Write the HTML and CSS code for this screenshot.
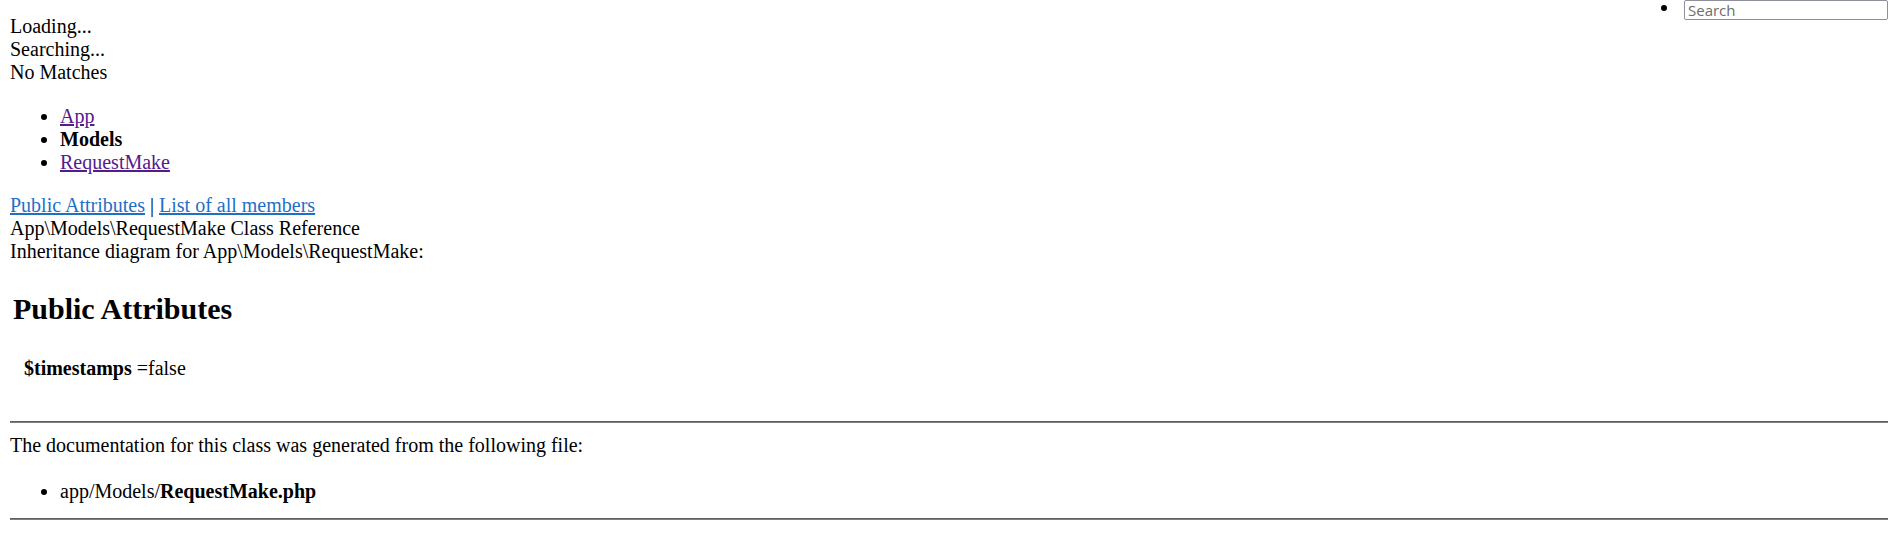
FILE: index.html
```html
<!DOCTYPE html>
<html>
<head>
<meta charset="utf-8">
<title>App\Models\RequestMake Class Reference</title>
<link rel="stylesheet" href="styles.css">
</head>
<body>
<div class="top">
  <ul class="main-menu">
    <li class="search-item"><span class="bullet"></span><input class="search-box" type="text" placeholder="Search"></li>
  </ul>
  <div class="search-results">
    <div>Loading...</div>
    <div>Searching...</div>
    <div>No Matches</div>
  </div>
  <ul class="navpath">
    <li><a class="visited" href="#">App</a></li>
    <li><b>Models</b></li>
    <li><a class="visited" href="#">RequestMake</a></li>
  </ul>
</div>
<div class="header">
  <div class="summary"><a class="link" href="#pub-attribs">Public Attributes</a> | <a class="link" href="#">List of all members</a></div>
  <div class="headertitle">App\Models\RequestMake Class Reference</div>
</div>
<div class="contents">
  <div class="dynheader">Inheritance diagram for App\Models\RequestMake:</div>
  <table class="memberdecls">
    <tr><td colspan="2"><h2 class="groupheader">Public Attributes</h2></td></tr>
    <tr><td class="memitem-left">&nbsp;</td><td class="memitem-right"><b>$timestamps</b> =false</td></tr>
    <tr><td class="memsep" colspan="2">&nbsp;</td></tr>
  </table>
  <hr class="rule rule-mid">
  <div class="docfrom">The documentation for this class was generated from the following file:</div>
  <ul class="files">
    <li>app/Models/<b>RequestMake.php</b></li>
  </ul>
</div>
<hr class="rule rule-end">
</body>
</html>
```

FILE: styles.css
```css
html, body {
  background: #fff;
}
body {
  margin: 0 5px 10px 10px;
  font-family: "Liberation Serif", "Times New Roman", serif;
  font-size: 20px;
  line-height: 23px;
  color: #000;
}
.main-menu {
  float: right;
  margin: 0;
  padding: 0;
  list-style: none;
}
.search-item {
  display: flex;
  align-items: flex-start;
  gap: 17px;
  margin: 0;
}
.bullet {
  flex: 0 0 6px;
  display: block;
  width: 6px;
  height: 6px;
  margin-top: 5px;
  border-radius: 50%;
  background: #000;
}
.search-box {
  box-sizing: border-box;
  flex: 0 0 204px;
  display: block;
  width: 204px;
  height: 20px;
  margin: 0;
  padding: 0 3px;
  border: 1px solid #8f8f9d;
  border-radius: 2px;
  font-family: "Open Sans", "Liberation Sans", sans-serif;
  font-size: 15px;
  line-height: 18px;
}
.search-box::placeholder {
  color: #6d6d6d;
}
.search-results {
  padding-top: 15px;
}
.navpath {
  margin: 21px 0 20px;
  padding-left: 50px;
}
a.visited {
  color: #551a8b;
}
a.link {
  color: #1f6fc8;
}
.memberdecls {
  border-spacing: 2px;
}
.groupheader {
  font-size: 30px;
  line-height: 35px;
  margin: 25px 0 27px;
}
.memitem-left,
.memitem-right,
.memsep {
  padding: 1px;
}
.rule {
  height: 0;
  border: 0;
  border-top: 1px solid #5f5f5f;
  border-bottom: 1px solid #808080;
}
.rule-mid {
  margin: 11px 0;
}
.rule-end {
  margin: 15px 0 10px;
}
.files {
  margin: 23px 0 14px;
  padding-left: 50px;
}
```
